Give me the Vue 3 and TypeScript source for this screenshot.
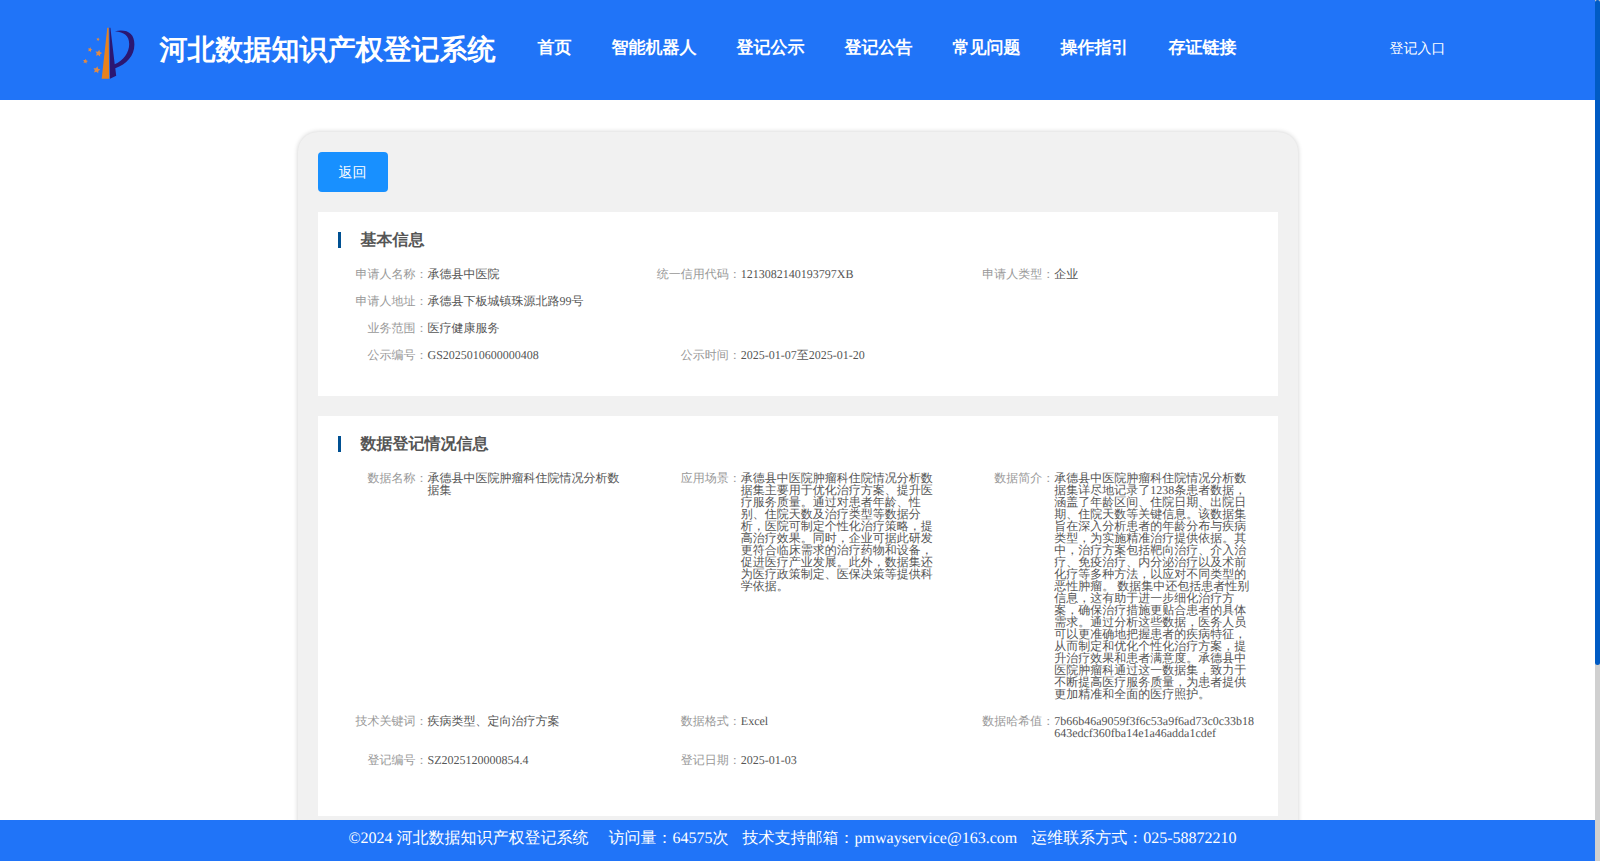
<script setup lang="ts">
interface Field {
  label: string
  value: string
}
interface Section {
  title: string
  rows: Field[][]
  tall?: boolean
}

const nav: string[] = ['首页', '智能机器人', '登记公示', '登记公告', '常见问题', '操作指引', '存证链接']

const sections: Section[] = [
  {
    title: '基本信息',
    rows: [
      [
        { label: '申请人名称', value: '承德县中医院' },
        { label: '统一信用代码', value: '1213082140193797XB' },
        { label: '申请人类型', value: '企业' },
      ],
      [{ label: '申请人地址', value: '承德县下板城镇珠源北路99号' }],
      [{ label: '业务范围', value: '医疗健康服务' }],
      [
        { label: '公示编号', value: 'GS2025010600000408' },
        { label: '公示时间', value: '2025-01-07至2025-01-20' },
      ],
    ],
  },
  {
    title: '数据登记情况信息',
    tall: true,
    rows: [
      [
        { label: '数据名称', value: '承德县中医院肿瘤科住院情况分析数据集' },
        {
          label: '应用场景',
          value:
            '承德县中医院肿瘤科住院情况分析数据集主要用于优化治疗方案、提升医疗服务质量。通过对患者年龄、性别、住院天数及治疗类型等数据分析，医院可制定个性化治疗策略，提高治疗效果。同时，企业可据此研发更符合临床需求的治疗药物和设备，促进医疗产业发展。此外，数据集还为医疗政策制定、医保决策等提供科学依据。',
        },
        {
          label: '数据简介',
          value:
            '承德县中医院肿瘤科住院情况分析数据集详尽地记录了1238条患者数据，涵盖了年龄区间、住院日期、出院日期、住院天数等关键信息。该数据集旨在深入分析患者的年龄分布与疾病类型，为实施精准治疗提供依据。其中，治疗方案包括靶向治疗、介入治疗、免疫治疗、内分泌治疗以及术前化疗等多种方法，以应对不同类型的恶性肿瘤。 数据集中还包括患者性别信息，这有助于进一步细化治疗方案，确保治疗措施更贴合患者的具体需求。通过分析这些数据，医务人员可以更准确地把握患者的疾病特征，从而制定和优化个性化治疗方案，提升治疗效果和患者满意度。承德县中医院肿瘤科通过这一数据集，致力于不断提高医疗服务质量，为患者提供更加精准和全面的医疗照护。',
        },
      ],
      [
        { label: '技术关键词', value: '疾病类型、定向治疗方案' },
        { label: '数据格式', value: 'Excel' },
        { label: '数据哈希值', value: '7b66b46a9059f3f6c53a9f6ad73c0c33b18643edcf360fba14e1a46adda1cdef' },
      ],
      [
        { label: '登记编号', value: 'SZ2025120000854.4' },
        { label: '登记日期', value: '2025-01-03' },
      ],
    ],
  },
]

// Centre x, centre y and radius of each star in the logo
const stars: [number, number, number][] = [
  [18, 16.3, 1.8],
  [10, 26.7, 2.4],
  [18.6, 30.3, 3.6],
  [5.4, 38.3, 2.6],
  [16.7, 47, 3.7],
]

function starPoints([cx, cy, r]: [number, number, number]): string {
  return Array.from({ length: 10 }, (_, i) => {
    const a = (Math.PI / 5) * i - Math.PI / 2 + 0.2
    const d = i % 2 ? r * 0.5 : r
    return `${(cx + d * Math.cos(a)).toFixed(2)},${(cy + d * Math.sin(a)).toFixed(2)}`
  }).join(' ')
}
</script>

<template>
  <div class="window">
    <div class="page">
      <header class="header">
        <svg class="logo" viewBox="0 0 60 60" width="60" height="60">
          <polygon v-for="(s, i) in stars" :key="i" :points="starPoints(s)" fill="#e08a45" />
          <path d="M27.3 4.7 L28.6 4.7 L29.2 55.8 L21.7 55.8 Z" fill="#e8821e" />
          <path d="M29.5 4.7 L30.4 4.7 L34.7 41.3 C43.5 37.5 49.2 29.5 49.2 21 C49.2 12.5 44 9.2 35 8.2 C47 6 54.4 10 54.4 21.5 C54.4 33 46.5 41 35.3 45.3 L36.2 52.7 L30 55.8 Z" fill="#2b1772" />
        </svg>
        <h1 class="brand">河北数据知识产权登记系统</h1>
        <nav class="nav">
          <a v-for="item in nav" :key="item">{{ item }}</a>
        </nav>
        <a class="entry">登记入口</a>
      </header>

      <main class="main">
        <div class="container">
          <button class="back">返回</button>
          <section v-for="s in sections" :key="s.title" class="card" :class="{ tall: s.tall }">
            <h2 class="card-title">{{ s.title }}</h2>
            <div v-for="(row, i) in s.rows" :key="i" class="row">
              <div v-for="f in row" :key="f.label" class="field">
                <span class="label">{{ f.label }}：</span>
                <span class="value">{{ f.value }}</span>
              </div>
            </div>
          </section>
        </div>
      </main>

      <footer class="footer">
        <span class="copyright">©2024 河北数据知识产权登记系统</span>
        <span>访问量：64575次</span>
        <span>技术支持邮箱：pmwayservice@163.com</span>
        <span>运维联系方式：025-58872210</span>
      </footer>
    </div>
    <div class="scrollbar"><div class="thumb"></div></div>
  </div>
</template>

<style>
body {
  margin: 0;
  overflow: hidden;
}
</style>

<style scoped>
.window {
  display: flex;
  height: 861px;
  font-family: 'Liberation Serif', serif;
  text-rendering: geometricPrecision;
  background: #fff;
}
.page {
  flex: 1;
  min-width: 0;
  display: flex;
  flex-direction: column;
}
.header {
  flex: none;
  height: 100px;
  display: flex;
  align-items: center;
  background: #2074f8;
  color: #fff;
  white-space: nowrap;
}
.logo {
  flex: none;
  margin: 6px 19.5px 0 80px;
}
.brand {
  margin: 2px 0 0;
  width: 378px;
  font-size: 28px;
  line-height: 32px;
  font-weight: bold;
}
.nav {
  display: flex;
  gap: 40px;
  font-size: 17px;
  line-height: 20px;
  font-weight: bold;
  margin-top: -4px;
}
.entry {
  margin: 0 149.5px 0 auto;
  font-size: 14px;
  line-height: 16px;
}
.main {
  flex: 1;
  min-height: 0;
  overflow: hidden;
  padding-top: 32px;
}
.container {
  box-sizing: border-box;
  width: 1000px;
  height: 760px;
  margin: 0 auto;
  padding: 20px;
  border-radius: 20px;
  background: #f1f1f1;
  box-shadow: 0 0 5px rgba(0, 0, 0, 0.2);
}
.back {
  display: block;
  width: 70px;
  height: 40px;
  padding: 3px 0 0;
  border: 0;
  border-radius: 4px;
  background: #1890ff;
  color: #fff;
  font: 14px 'Liberation Serif', serif;
  text-rendering: inherit;
}
.card {
  margin-top: 20px;
  padding: 20px 0 20px 20px;
  background: #fff;
}
.card.tall {
  padding-bottom: 35px;
}
.card-title {
  height: 16px;
  margin: 0 0 20px;
  padding-left: 20px;
  border-left: 3px solid #005092;
  font-size: 16px;
  line-height: 18px;
  color: #555;
}
.row {
  display: grid;
  grid-template-columns: repeat(3, 1fr);
  margin-bottom: 15px;
  font-size: 12px;
  line-height: 12px;
}
.field {
  display: flex;
}
.label {
  flex: none;
  width: 90px;
  text-align: right;
  color: #999;
}
.value {
  width: 200px;
  color: #555;
  overflow-wrap: anywhere;
}
.footer {
  position: relative;
  flex: none;
  box-sizing: border-box;
  height: 41px;
  padding: 10px 0 0 348.4px;
  display: flex;
  gap: 14px;
  background: #2074f8;
  color: #fff;
  font-size: 16px;
  line-height: 18px;
  white-space: nowrap;
}
.copyright {
  margin-right: 6px;
}
.scrollbar {
  flex: none;
  width: 5px;
  background: #d0d0d0;
}
.thumb {
  height: 665px;
  border-radius: 3px;
  background: #005bc4;
}
</style>
